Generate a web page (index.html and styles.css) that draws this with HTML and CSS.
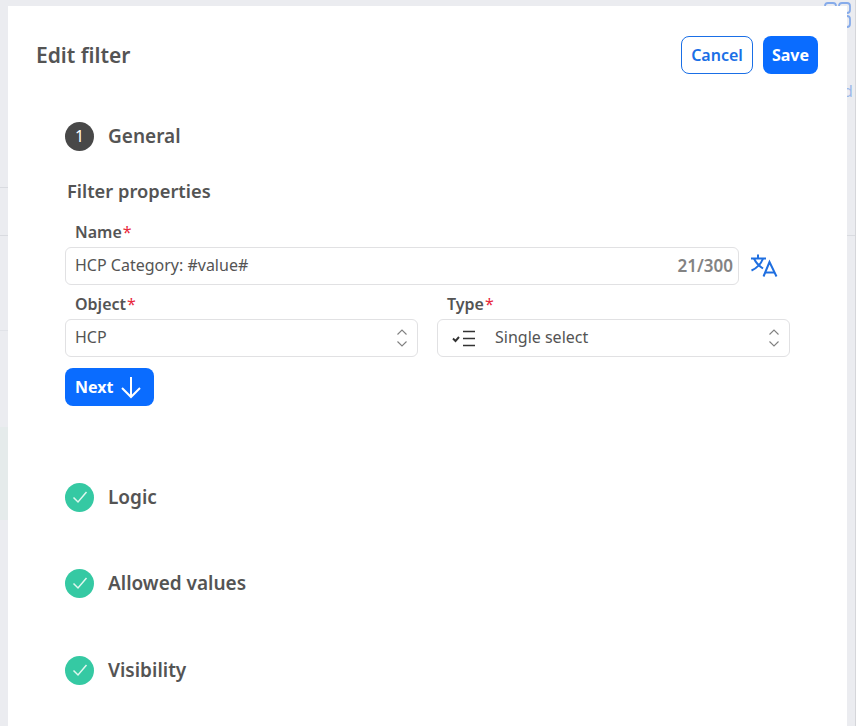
FILE: index.html
```html
<!DOCTYPE html>
<html lang="en">

<head>
	<meta charset="UTF-8">
	<title>Edit filter</title>
	<link rel="stylesheet" href="styles.css">
</head>

<body>
	<!-- bits of the page behind the dialog -->
	<div class="behind">
		<svg class="behind-icon" width="28" height="28" viewBox="0 0 28 28" fill="none" stroke="#86abea" stroke-width="1.8">
			<rect x="1" y="3" width="11" height="10" rx="3"></rect>
			<rect x="15" y="3" width="11" height="10" rx="3"></rect>
			<rect x="15" y="16" width="11" height="11" rx="3"></rect>
		</svg>
		<span class="behind-text">d</span>
		<div class="behind-patch"></div>
		<div class="behind-line line1"></div>
		<div class="behind-line line2"></div>
		<div class="behind-line line3"></div>
		<div class="behind-line line4"></div>
		<div class="behind-edge"></div>
	</div>

	<div class="modal">
		<div class="modal-head">
			<h1>Edit filter</h1>
			<div class="head-buttons">
				<button type="button" class="butn butn-outline">Cancel</button>
				<button type="button" class="butn butn-primary">Save</button>
			</div>
		</div>

		<div class="steps">
			<div class="step step-open">
				<span class="step-num">1</span>
				<h2>General</h2>
			</div>

			<h3>Filter properties</h3>

			<div class="field">
				<label>Name<em>*</em></label>
				<div class="name-row">
					<div class="input">
						<span>HCP Category: #value#</span>
						<span class="count">21/300</span>
					</div>
					<svg class="translate" width="28" height="26" viewBox="0 0 28 26" fill="none" stroke="#1f6fe0" stroke-width="2">
						<path d="M1 6.5H16"></path>
						<path d="M8 2.5V6.5"></path>
						<path d="M13 6.5C11 12 7 16 1.5 18.5"></path>
						<path d="M4 6.5C6 11 9 14 13 16.5"></path>
						<path d="M13.5 24.5L19.5 10L26.5 24.5"></path>
						<path d="M15.5 20.5H24.5"></path>
					</svg>
				</div>
			</div>

			<div class="field-row">
				<div class="field">
					<label>Object<em>*</em></label>
					<div class="input select">
						<span>HCP</span>
						<svg class="updown" width="12" height="20" viewBox="0 0 12 20" fill="none" stroke="#808080" stroke-width="1.1">
							<path d="M1.5 6.5L6 2L10.5 6.5"></path>
							<path d="M1.5 13.5L6 18L10.5 13.5"></path>
						</svg>
					</div>
				</div>
				<div class="field">
					<label>Type<em>*</em></label>
					<div class="input select">
						<span class="type-value">
							<svg class="type-icon" width="24" height="18" viewBox="0 0 24 18" fill="none" stroke="#333">
								<path d="M2 9.5L4.5 12L8 8" stroke-width="1.9"></path>
								<path d="M12 2.5H24M12 9.5H24M12 16.5H24" stroke-width="1.7"></path>
							</svg>
							Single select
						</span>
						<svg class="updown" width="12" height="20" viewBox="0 0 12 20" fill="none" stroke="#808080" stroke-width="1.1">
							<path d="M1.5 6.5L6 2L10.5 6.5"></path>
							<path d="M1.5 13.5L6 18L10.5 13.5"></path>
						</svg>
					</div>
				</div>
			</div>

			<button type="button" class="butn butn-primary butn-next">
				Next
				<svg width="22" height="24" viewBox="0 0 22 24" fill="none" stroke="#fff" stroke-width="2">
					<path d="M11 2V22"></path>
					<path d="M2 13L11 22L20 13"></path>
				</svg>
			</button>

			<div class="step step-done first-done">
				<span class="step-check">
					<svg width="16" height="14" viewBox="0 0 16 14" fill="none" stroke="#dff7ef" stroke-width="1.5"><path d="M1.5 7.5L6 12L14.5 2"></path></svg>
				</span>
				<h2>Logic</h2>
			</div>
			<div class="step step-done">
				<span class="step-check">
					<svg width="16" height="14" viewBox="0 0 16 14" fill="none" stroke="#dff7ef" stroke-width="1.5"><path d="M1.5 7.5L6 12L14.5 2"></path></svg>
				</span>
				<h2>Allowed values</h2>
			</div>
			<div class="step step-done step-last">
				<span class="step-check">
					<svg width="16" height="14" viewBox="0 0 16 14" fill="none" stroke="#dff7ef" stroke-width="1.5"><path d="M1.5 7.5L6 12L14.5 2"></path></svg>
				</span>
				<h2>Visibility</h2>
			</div>
		</div>
	</div>
</body>

</html>
```

FILE: styles.css
```css
html,
body {
	height: 100%;
}

body {
	margin: 0;
	height: 726px;
	overflow: hidden;
	position: relative;
	background-color: #ebecf0;
	font-family: "Noto Sans", "Liberation Sans", sans-serif;
	color: #545454;
	box-sizing: border-box;
	padding: 6px 9px 0 8px;
}

.behind-icon {
	position: absolute;
	top: 0;
	left: 824px;
}

.behind-text {
	position: absolute;
	top: 80px;
	left: 843px;
	font-size: 16px;
	color: #9db9ea;
}

.behind-patch {
	position: absolute;
	left: 0;
	width: 8px;
	top: 427px;
	height: 93px;
	background: #e5ebeb;
}

.behind-line {
	position: absolute;
	height: 1px;
	background: #d9dbe0;
}

.line1 {
	left: 0;
	width: 8px;
	top: 187px;
}

.line2 {
	left: 0;
	width: 8px;
	top: 235px;
}

.line3 {
	left: 847px;
	width: 8px;
	top: 235px;
}

.line4 {
	left: 0;
	width: 8px;
	top: 330px;
	background: #e1e3e8;
}

.behind-edge {
	position: absolute;
	top: 0;
	bottom: 0;
	left: 855px;
	width: 1px;
	background: #d5d6da;
}

.modal {
	position: relative;
	height: 720px;
	background: #fff;
	box-sizing: border-box;
	padding: 30px 29px 0 28px;
}

.modal-head {
	display: flex;
	justify-content: space-between;
	align-items: center;
	height: 37px;
}

h1 {
	margin: 0;
	font-size: 21px;
	line-height: 28px;
	font-weight: 600;
}

.head-buttons {
	display: flex;
	gap: 10px;
}

.butn {
	height: 38px;
	border-radius: 8px;
	font-family: inherit;
	font-size: 16px;
	font-weight: 600;
	padding: 0;
}

.butn-outline {
	width: 72px;
	background: #fff;
	border: 1px solid #1a6fe6;
	color: #1a6fe6;
}

.butn-primary {
	width: 55px;
	background: #0a6cff;
	border: none;
	color: #fff;
	font-weight: 700;
}

.steps {
	padding: 48px 28px 0 29px;
}

.step {
	display: flex;
	align-items: center;
	gap: 14px;
	height: 30px;
}

.step h2 {
	margin: 0;
	font-size: 19px;
	line-height: 26px;
	font-weight: 600;
}

.step-num,
.step-check {
	width: 29px;
	height: 29px;
	border-radius: 50%;
	display: flex;
	align-items: center;
	justify-content: center;
}

.step-num {
	background: #484848;
	color: #fff;
	font-size: 16px;
}

.step-check {
	background: #35c9a3;
}

.step-done {
	margin-top: 56px;
}

.first-done {
	margin-top: 76px;
}

.step-last {
	margin-top: 57px;
}

h3 {
	margin: 28px 0 0 2px;
	font-size: 18.3px;
	line-height: 24px;
	font-weight: 600;
}

.field {
	flex: 1;
}

.field label {
	display: block;
	margin-left: 10px;
	height: 19px;
	margin-bottom: 5px;
	font-size: 16px;
	line-height: 19px;
	font-weight: 600;
}

.field label em {
	color: #e8283c;
	font-style: normal;
	font-weight: 400;
	margin-left: 1px;
}

h3 + .field {
	margin-top: 20px;
}

.name-row {
	display: flex;
	align-items: center;
	gap: 11px;
	margin-right: 12px;
}

.translate {
	margin-top: -3px;
}

.input {
	flex: 1;
	height: 38px;
	box-sizing: border-box;
	border: 1px solid #e1e1e3;
	border-radius: 6px;
	padding: 0 5px 2px 9px;
	display: flex;
	align-items: center;
	justify-content: space-between;
	font-size: 16px;
	background: #fff;
}

.count {
	color: #838383;
	font-size: 17px;
	font-weight: 600;
}

.field-row {
	display: flex;
	gap: 19px;
	margin-top: 10px;
}

.select {
	padding-right: 9px;
	padding-bottom: 0;
}

.select > span {
	margin-bottom: 2px;
}

.type-value {
	display: flex;
	align-items: center;
}

.type-icon {
	margin: 2px 20px 0 4px;
}

.butn-next {
	display: flex;
	align-items: center;
	gap: 7px;
	width: 89px;
	margin-top: 11px;
	padding-left: 10px;
}
```
